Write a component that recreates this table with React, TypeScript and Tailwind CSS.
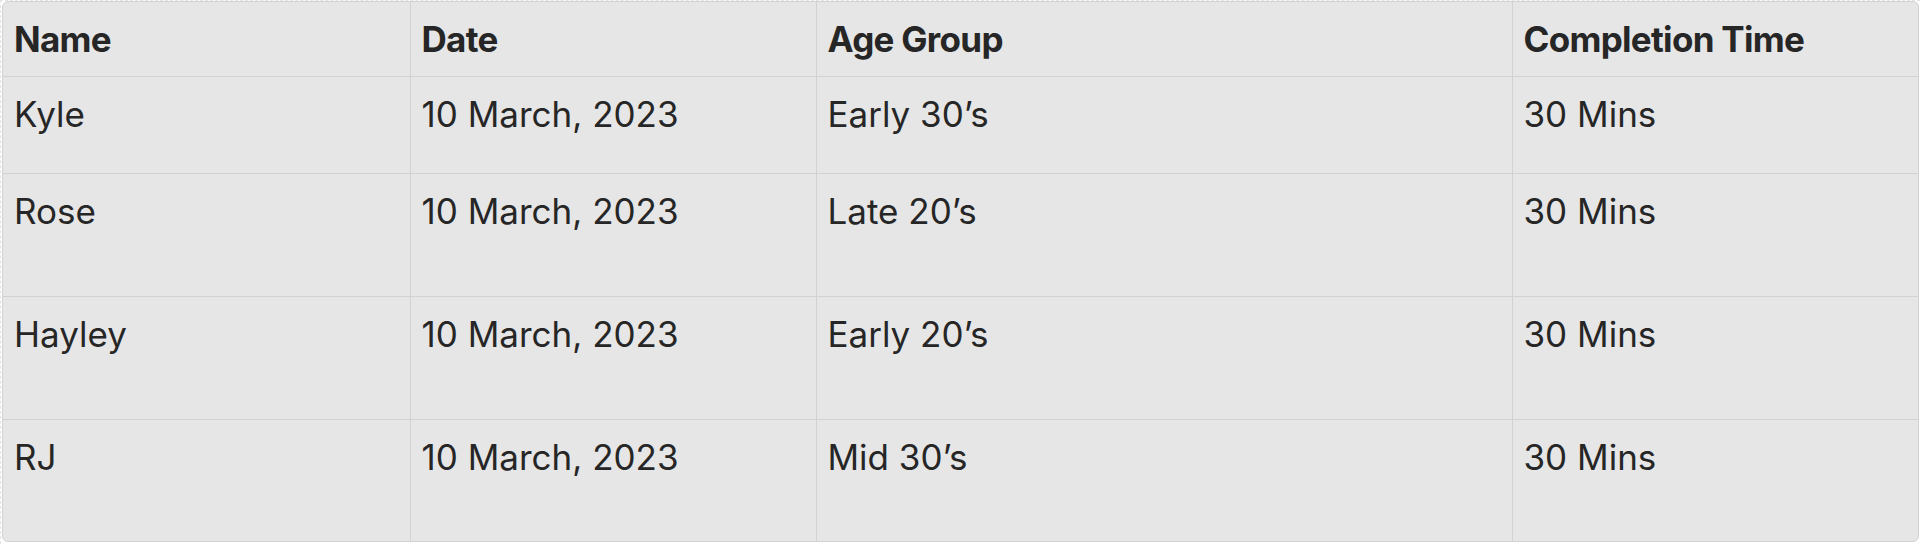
const rows = [
  { name: 'Kyle', date: '10 March, 2023', age: 'Early 30’s', time: '30 Mins', h: 'h-[97px]' },
  { name: 'Rose', date: '10 March, 2023', age: 'Late 20’s', time: '30 Mins', h: 'h-[123px]' },
  { name: 'Hayley', date: '10 March, 2023', age: 'Early 20’s', time: '30 Mins', h: 'h-[123px]' },
  { name: 'RJ', date: '10 March, 2023', age: 'Mid 30’s', time: '30 Mins', h: 'h-[122px]' },
];

const cell = 'pl-[11px] pr-3 pt-[11px] align-top border-[#d2d2d2]';
const head = `${cell} text-left font-bold tracking-[-0.02em]`;

export default function App() {
  return (
    <div className="w-[1920px] h-[544px] bg-white pl-[1px] pr-[1px] border-t border-l border-dashed border-[#e4e4e4]">
      <div
        className="rounded-md border border-[#d2d2d2] bg-[#e6e6e6] overflow-hidden text-[#262626] text-[35px]"
        style={{ fontFamily: 'Inter, "Noto Sans", sans-serif' }}
      >
        <table className="w-full border-collapse table-fixed">
          <colgroup>
            <col className="w-[407px]" />
            <col className="w-[406px]" />
            <col className="w-[696px]" />
            <col />
          </colgroup>
          <thead>
            <tr className="h-[74px]">
              <th className={`${head} border-b border-r`}>Name</th>
              <th className={`${head} border-b border-r`}>Date</th>
              <th className={`${head} border-b border-r`}>Age Group</th>
              <th className={`${head} border-b`}>Completion Time</th>
            </tr>
          </thead>
          <tbody>
            {rows.map((r, i) => {
              const b = i < rows.length - 1 ? 'border-b' : '';
              return (
                <tr key={r.name} className={r.h}>
                  <td className={`${cell} ${b} border-r`}>{r.name}</td>
                  <td className={`${cell} ${b} border-r`}>{r.date}</td>
                  <td className={`${cell} ${b} border-r`}>{r.age}</td>
                  <td className={`${cell} ${b}`}>{r.time}</td>
                </tr>
              );
            })}
          </tbody>
        </table>
      </div>
    </div>
  );
}
